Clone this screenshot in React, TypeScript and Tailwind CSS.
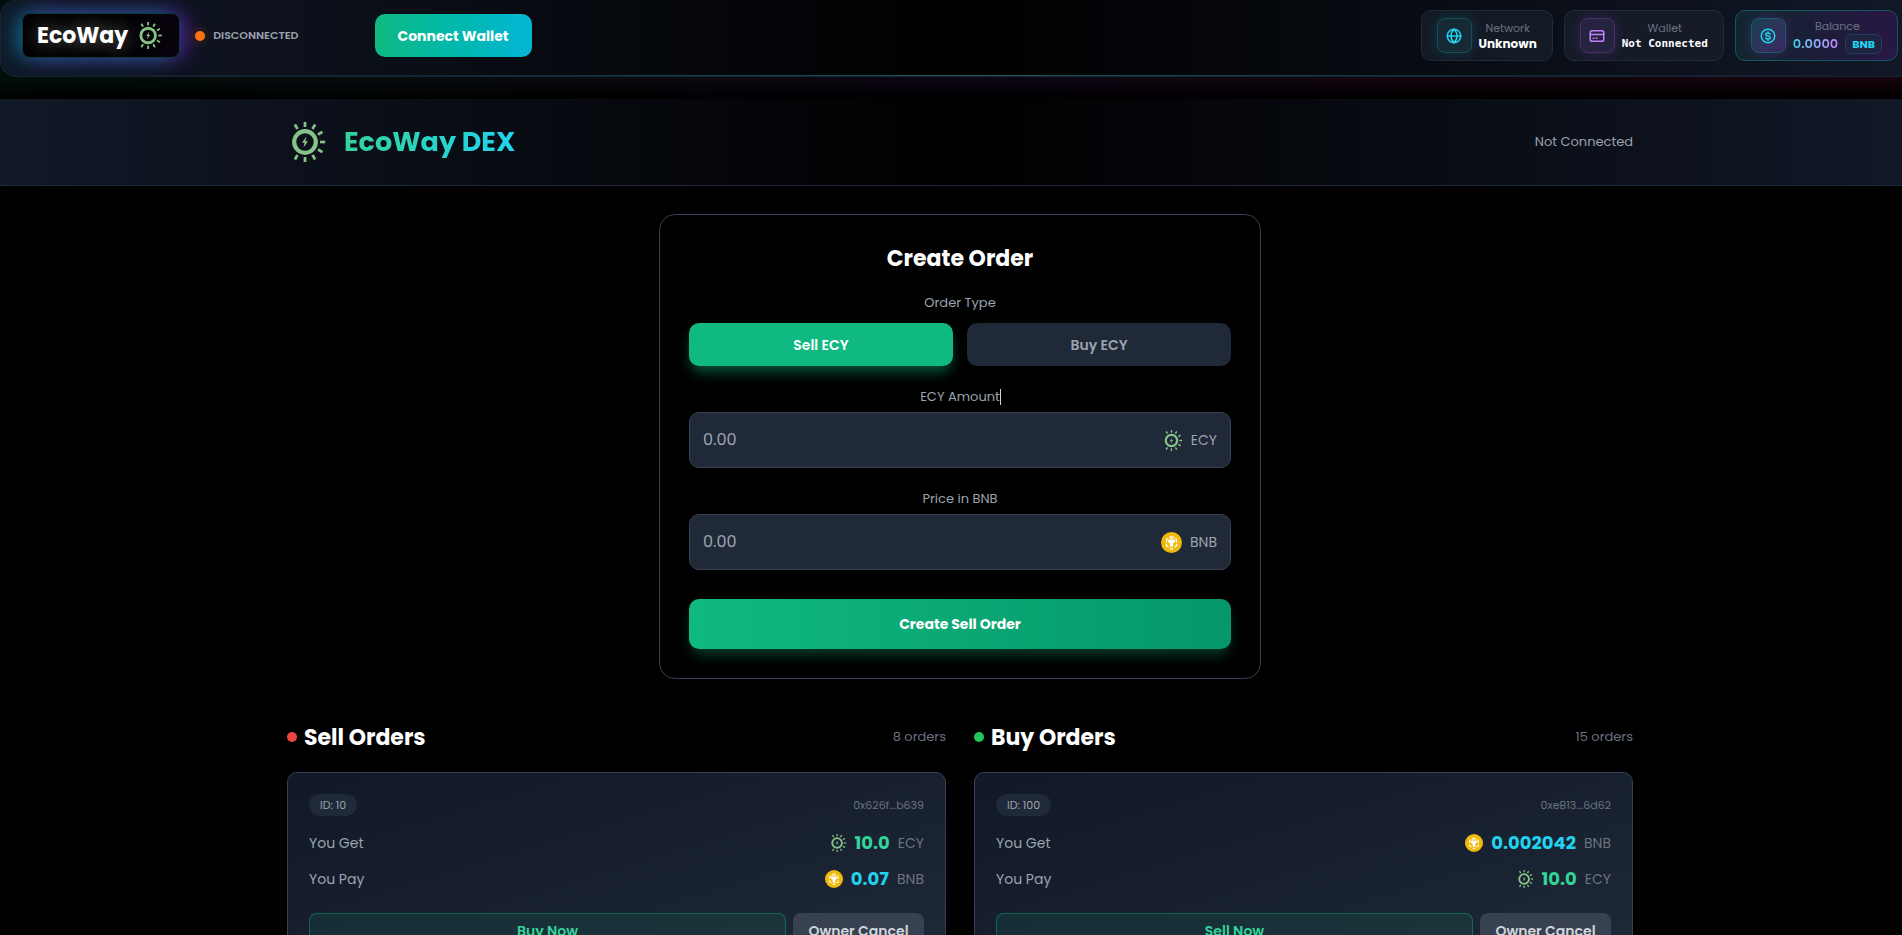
import React, { useState } from 'react';

type Token = 'ECY' | 'BNB';

type Order = {
  id: number;
  owner: string;
  get: { amount: string; token: Token };
  pay: { amount: string; token: Token };
};

const sellOrders: Order[] = [
  { id: 10, owner: '0x626f...b639', get: { amount: '10.0', token: 'ECY' }, pay: { amount: '0.07', token: 'BNB' } }
];

const buyOrders: Order[] = [
  { id: 100, owner: '0xeB13...6d62', get: { amount: '0.002042', token: 'BNB' }, pay: { amount: '10.0', token: 'ECY' } }
];

// no rays on the left side of the logo
const rays = [-120, -90, -60, -30, 0, 30, 60, 90, 120];

const EcoLogo: React.FC<{ className?: string }> = ({ className }) => (
  <svg viewBox="0 0 40 40" className={className} aria-hidden="true">
    <circle cx="18" cy="20" r="10.8" fill="none" stroke="#86c388" strokeWidth="4.2" />
    {rays.map((a) => (
      <line key={a} x1="33" y1="20" x2="38.2" y2="20" stroke="#86c388" strokeWidth="2.7" transform={`rotate(${a} 18 20)`} />
    ))}
    <path d="M19.4 14.600 15 20.800h2.500L16.600 25.400 21 19.200h-2.500z" fill="#86c388" />
  </svg>
);

const BnbLogo: React.FC<{ className?: string }> = ({ className }) => (
  <svg viewBox="0 0 40 40" className={className} aria-hidden="true">
    <circle cx="20" cy="20" r="20" fill="#f0b90b" />
    <g fill="none" stroke="#fff" strokeWidth="2.4">
      <path d="M15 11.5 20 8.6l5 2.9M10.500 20v-6l2.500-1.500M29.500 20v-6l-2.500-1.500M10.500 22.500v4l4 2.400M29.500 22.500v4l-4 2.400M17 31l3 1.700 3-1.700" />
    </g>
    <path d="m20 11.500 3 1.700-3 1.800-3-1.800zM13 15.500l3-1.500 4 2.400 4-2.400 3 1.500v3.500l-4 2.400v5.600l-3 1.800-3-1.800v-5.600l-4-2.400z" fill="#fff" />
  </svg>
);

const TokenIcon: React.FC<{ token: Token; className?: string }> = ({ token, className }) =>
  token === 'ECY' ? <EcoLogo className={className} /> : <BnbLogo className={className} />;

const iconProps = {
  viewBox: '0 0 24 24',
  fill: 'none',
  stroke: 'currentColor',
  strokeWidth: 2,
  strokeLinecap: 'round' as const,
  strokeLinejoin: 'round' as const,
  className: 'h-[18px] w-[18px]'
};

const stats = [
  {
    label: 'Network',
    card: 'border-[#232b38] bg-[#141a25]',
    box: 'border-[#164e5c] bg-[#162a36] text-[#22d3ee] shadow-[0_0_12px_rgba(6,182,212,0.2)]',
    icon: (
      <svg {...iconProps}>
        <circle cx="12" cy="12" r="9" />
        <path d="M3 12h18M12 3c-5.300 5-5.300 13 0 18M12 3c5.300 5 5.300 13 0 18" />
      </svg>
    ),
    value: <div className="text-xs leading-4 font-bold text-white">Unknown</div>
  },
  {
    label: 'Wallet',
    card: 'border-[#232b38] bg-[#151b27]',
    box: 'border-[#4a2f6b] bg-[#262340] text-[#c084fc] shadow-[0_0_12px_rgba(168,85,247,0.2)]',
    icon: (
      <svg {...iconProps}>
        <rect x="3" y="5" width="18" height="14" rx="2.500" />
        <path d="M3 10h18M7 15h1M11 15h1" />
      </svg>
    ),
    value: (
      <div className="font-['DejaVu_Sans_Mono',monospace] text-[11px] leading-4 font-bold text-white">Not Connected</div>
    )
  },
  {
    label: 'Balance',
    card: 'border-[#155563] bg-gradient-to-r from-[#11262f] via-[#1c1d38] to-[#281745]',
    box: 'border-[#1b5a70] bg-gradient-to-br from-[#14404f] to-[#3b2563] text-[#22d3ee] shadow-[0_0_12px_rgba(168,85,247,0.2)]',
    icon: (
      <svg {...iconProps}>
        <circle cx="12" cy="12" r="9" />
        <path d="M15 9.500c-.5-1-1.600-1.500-3-1.500-1.700 0-3 .800-3 2s1.300 1.700 3 2 3 .800 3 2-1.300 2-3 2c-1.400 0-2.500-.5-3-1.500M12 6.500V8M12 16v1.500" />
      </svg>
    ),
    value: (
      <div className="flex items-center gap-[7px]">
        <span className="bg-gradient-to-r from-[#22d3ee] to-[#c084fc] bg-clip-text text-[13px] leading-4 font-semibold text-transparent">
          0.0000
        </span>
        <span className="rounded-md border border-[#1f3f5c] bg-[#1f2440] px-1.5 text-[11px] leading-[18px] font-bold text-[#22d3ee]">
          BNB
        </span>
      </div>
    )
  }
];

const TopBar: React.FC = () => (
  <header className="relative flex h-[77px] items-start justify-between rounded-l-2xl border border-t-0 border-[#1a2331] bg-linear-to-r/srgb from-[#111827] via-black to-[#111827] pt-[10px] pr-[21px] pl-[21px]">
    <div className="absolute right-0 bottom-0 left-4 h-px bg-gradient-to-r from-transparent via-[#0e5a66] to-transparent" />
    <div className="flex items-center pt-[3px]">
      <a
        href="#"
        className="flex h-[45px] items-center gap-2 rounded-lg border border-[#0c3a42] bg-gradient-to-r from-black to-[#08030d] pr-4 pl-[14px] shadow-[-7px_0_20px_-1px_rgba(8,145,178,0.6),7px_0_20px_-1px_rgba(126,34,206,0.6)]"
      >
        <span className="text-[22px] font-bold text-white [text-shadow:0_0_18px_rgba(255,255,255,0.45)]">EcoWay</span>
        <EcoLogo className="h-[27px] w-[27px]" />
      </a>
      <div className="ml-[15px] flex items-center gap-2">
        <span className="h-[10px] w-[10px] rounded-full bg-[#f97316] shadow-[0_0_12px_rgba(249,115,22,0.35)]" />
        <span className="text-[11px] font-semibold text-[#9ca3af]">DISCONNECTED</span>
      </div>
      <button
        type="button"
        className="ml-[76px] h-[43px] cursor-pointer rounded-[10px] bg-gradient-to-r from-[#10b981] to-[#06b6d4] px-[23px] text-sm font-bold text-white"
      >
        Connect Wallet
      </button>
    </div>

    <div className="flex gap-[11px]">
      {stats.map((s) => (
        <div key={s.label} className={`flex h-[51px] items-center gap-[7px] rounded-[10px] border px-[15px] ${s.card}`}>
          <div className={`flex h-[35px] w-[35px] items-center justify-center rounded-lg border ${s.box}`}>{s.icon}</div>
          <div className="text-center">
            <div className="text-[11px] leading-4 text-[#6b7280]">{s.label}</div>
            {s.value}
          </div>
        </div>
      ))}
    </div>
  </header>
);

const AmountField: React.FC<{ id: string; label: string; token: Token }> = ({ id, label, token }) => (
  <>
    <label htmlFor={id} className="mt-[21px] mb-[5px] block text-center text-[13px] leading-5 text-[#9ca3af]">
      {label}
      {token === 'ECY' && <span className="-mr-px inline-block h-4 w-px bg-[#d1d5db] align-middle" />}
    </label>
    <div className="flex h-14 items-center rounded-[10px] border border-[#374151] bg-[#1f2937] px-[13px]">
      <input
        id={id}
        placeholder="0.00"
        className="min-w-0 flex-1 bg-transparent text-base text-white outline-none placeholder:text-[#9ca3af]"
      />
      <TokenIcon token={token} className="h-[21px] w-[21px]" />
      <span className="ml-2 text-sm text-[#9ca3af]">{token}</span>
    </div>
  </>
);

const CreateOrder: React.FC = () => {
  const [type, setType] = useState<'Sell' | 'Buy'>('Sell');
  return (
    <section className="mx-auto max-w-[602px] rounded-2xl border border-[#374151] p-[29px]">
      <h2 className="mb-[19px] text-center text-[22px] leading-[30px] font-bold text-white">Create Order</h2>
      <div className="mb-[10px] text-center text-[13px] leading-5 text-[#9ca3af]">Order Type</div>
      <div className="grid grid-cols-2 gap-[14px]">
        {(['Sell', 'Buy'] as const).map((t) => (
          <button
            key={t}
            type="button"
            onClick={() => setType(t)}
            className={`h-[43px] cursor-pointer rounded-[10px] text-sm font-semibold ${
              type === t ? 'bg-[#10b981] text-white shadow-[0_8px_14px_-3px_rgba(16,185,129,0.5)]' : 'bg-[#1f2937] text-[#9ca3af]'
            }`}
          >
            {t} ECY
          </button>
        ))}
      </div>
      <AmountField id="ecy-amount" label="ECY Amount" token="ECY" />
      <AmountField id="bnb-price" label="Price in BNB" token="BNB" />
      <button
        type="button"
        className="mt-[29px] h-[50px] w-full cursor-pointer rounded-[10px] bg-gradient-to-r from-[#10b981] to-[#059669] text-sm font-bold text-white shadow-[0_8px_14px_-3px_rgba(16,185,129,0.35)]"
      >
        Create {type} Order
      </button>
    </section>
  );
};

const OrderRow: React.FC<{ label: string; amount: string; token: Token }> = ({ label, amount, token }) => (
  <div className="flex h-6 items-center justify-between">
    <span className="text-sm text-[#9ca3af]">{label}</span>
    <span className="flex items-center gap-2">
      <TokenIcon token={token} className="h-[18px] w-[18px]" />
      <span className={`text-lg font-bold ${token === 'ECY' ? 'text-[#34d399]' : 'text-[#22d3ee]'}`}>{amount}</span>
      <span className="text-sm text-[#6b7280]">{token}</span>
    </span>
  </div>
);

const OrderList: React.FC<{ title: string; dot: string; count: number; action: string; orders: Order[] }> = ({
  title,
  dot,
  count,
  action,
  orders
}) => (
  <section>
    <div className="mb-5 flex h-[30px] items-center justify-between">
      <h2 className="flex items-center gap-[7px] text-[22px] font-bold text-white">
        <span className={`h-[10px] w-[10px] rounded-full ${dot}`} />
        {title}
      </h2>
      <span className="text-[13px] text-[#6b7280]">{count} orders</span>
    </div>
    {orders.map((o) => (
      <article key={o.id} className="rounded-[10px] border border-[#374151] bg-gradient-to-br from-[#111827] to-[#1f2937] p-[21px]">
        <div className="mb-[15px] flex items-center justify-between text-[11px] leading-[22px]">
          <span className="rounded-full bg-[#1f2937] px-[11px] text-[#9ca3af]">ID: {o.id}</span>
          <span className="text-[#6b7280]">{o.owner}</span>
        </div>
        <div className="space-y-3">
          <OrderRow label="You Get" {...o.get} />
          <OrderRow label="You Pay" {...o.pay} />
        </div>
        <div className="mt-[22px] flex gap-[7px] text-sm font-semibold">
          <button type="button" className="h-9 flex-1 cursor-pointer rounded-lg border border-[#10b981]/40 bg-[#10b981]/10 text-[#34d399]">
            {action}
          </button>
          <button type="button" className="h-9 w-[131px] cursor-pointer rounded-lg bg-[#374151] text-[#d1d5db]">
            Owner Cancel
          </button>
        </div>
      </article>
    ))}
  </section>
);

const App: React.FC = () => {
  return (
    <div className="min-h-screen overflow-x-clip bg-black font-[Poppins,Inter,sans-serif]">
      <div className="w-[calc(100%+18px)]">
        <div className="bg-[linear-gradient(to_bottom,transparent_77px,black),linear-gradient(to_right,#02100c,#0e0614_50%,#17040d)] pb-[22px]">
          <TopBar />
        </div>

        <div className="border-b border-[#1f2937] bg-linear-to-r/srgb from-[#111827] via-black to-[#111827]">
          <div className="mx-auto flex h-[86px] max-w-[1346px] items-center justify-between">
            <div className="flex items-center gap-[17px]">
              <EcoLogo className="h-10 w-10" />
              <h1 className="bg-gradient-to-r from-[#34d399] to-[#22d3ee] bg-clip-text text-[27px] font-bold text-transparent">
                EcoWay DEX
              </h1>
            </div>
            <span className="text-[13px] text-[#9ca3af]">Not Connected</span>
          </div>
        </div>

        <main className="mx-auto max-w-[1346px] pt-7">
          <CreateOrder />
          <div className="mt-[43px] grid grid-cols-2 gap-7">
            <OrderList title="Sell Orders" dot="bg-[#ef4444]" count={8} action="Buy Now" orders={sellOrders} />
            <OrderList title="Buy Orders" dot="bg-[#22c55e]" count={15} action="Sell Now" orders={buyOrders} />
          </div>
        </main>
      </div>
    </div>
  );
};

export default App;
